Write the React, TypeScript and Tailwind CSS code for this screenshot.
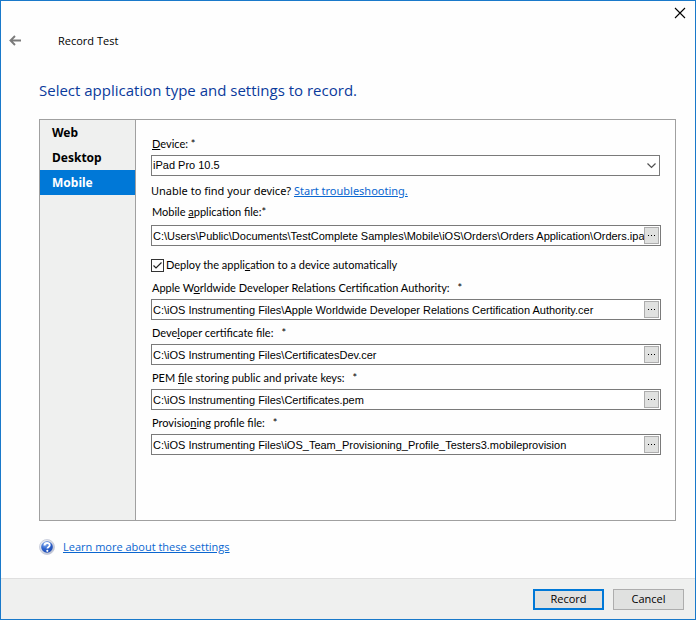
import type { ReactNode } from "react"
import clsx from "clsx"

const tabs = ["Web", "Desktop", "Mobile"]

const certificateFields = [
  {
    id: "authority",
    label: <>Apple W<u>o</u>rldwide Developer Relations Certification Authority:</>,
    value: "C:\\iOS Instrumenting Files\\Apple Worldwide Developer Relations Certification Authority.cer",
  },
  {
    id: "certificate",
    label: <>Deve<u>l</u>oper certificate file:</>,
    value: "C:\\iOS Instrumenting Files\\CertificatesDev.cer",
  },
  {
    id: "pem",
    label: <>PEM <u>f</u>ile storing public and private keys:</>,
    value: "C:\\iOS Instrumenting Files\\Certificates.pem",
  },
  {
    id: "profile",
    label: <>Provisio<u>n</u>ing profile file:</>,
    value: "C:\\iOS Instrumenting Files\\iOS_Team_Provisioning_Profile_Testers3.mobileprovision",
  },
]

function FileInput({ id, value }: { id: string; value: string }) {
  return (
    <div className="flex h-[21px] items-center border border-[#7a7a7a] bg-white pr-px">
      <input
        id={id}
        type="text"
        defaultValue={value}
        className="h-full min-w-0 flex-1 pl-px font-['Liberation_Sans',sans-serif] text-[11px] outline-none"
      />
      <button
        type="button"
        aria-label="Browse"
        className="flex h-[17px] w-[15px] items-center justify-center border border-[#adadad] bg-[#e0e1e0]"
      >
        <svg width="7" height="1" viewBox="0 0 7 1" shapeRendering="crispEdges">
          <path d="M0 0h1v1H0zM3 0h1v1H3zM6 0h1v1H6z" fill="#000" />
        </svg>
      </button>
    </div>
  )
}

function FieldLabel({ id, children }: { id: string; children: ReactNode }) {
  return (
    <label htmlFor={id} className="block h-4 pl-px leading-4">
      {children}
    </label>
  )
}

function HelpIcon() {
  return (
    <svg width="16" height="16" viewBox="0 0 16 16">
      <defs>
        <linearGradient id="ring" x1="0" y1="0" x2="1" y2="1">
          <stop offset="0" stopColor="#f4f6fa" />
          <stop offset="1" stopColor="#b4b9ca" />
        </linearGradient>
        <radialGradient id="ball" cx="0.35" cy="0.25" r="0.8">
          <stop offset="0" stopColor="#8fb4f0" />
          <stop offset="0.5" stopColor="#2f66d0" />
          <stop offset="1" stopColor="#1c48b0" />
        </radialGradient>
      </defs>
      <circle cx="8" cy="8" r="7.5" fill="url(#ring)" stroke="#c3c8d8" strokeWidth="0.8" />
      <circle cx="8" cy="8" r="5.8" fill="url(#ball)" />
      <path d="M5.5 6.5C5.5 4.8 6.6 4 8.1 4s2.6.8 2.6 2.2c0 1.6-2.3 1.8-2.3 3.4" fill="none" stroke="#fff" strokeWidth="1.9" />
      <circle cx="8.3" cy="11.8" r="1.1" fill="#fff" />
    </svg>
  )
}

export default function App() {
  return (
    <div className="flex min-h-screen flex-col border border-[#1979ca] bg-[#fefefe] font-['Open_Sans','Noto_Sans',sans-serif] text-[11px] text-black">
      <header>
        <div className="flex h-6 items-center justify-end pr-[9px]">
          <button type="button" aria-label="Close">
            <svg width="12" height="12" viewBox="0 0 12 12">
              <path d="M1 1l10 10M11 1L1 11" stroke="#000" strokeWidth="1.1" />
            </svg>
          </button>
        </div>
        <div className="flex h-8 items-center pl-2">
          <button type="button" aria-label="Back" className="w-[49px]">
            <svg width="12" height="12" viewBox="0 0 12 12">
              <path d="M12 5.5H1.5M6 1L1.5 5.5 6 10" fill="none" stroke="#7a7a7a" strokeWidth="1.9" />
            </svg>
          </button>
          <span>Record Test</span>
        </div>
      </header>

      <main className="flex flex-1 flex-col pr-[19px] pl-[38px]">
        <h1 className="mt-[21px] text-[15px] leading-6 text-[#0a3a9c]">
          Select application type and settings to record.
        </h1>

        <div className="mt-[17px] flex flex-1 border border-[#a0a0a0]">
          <nav className="w-24 border-r border-[#a0a0a0] bg-[#eff0ef]">
            {tabs.map((tab) => (
              <button
                key={tab}
                type="button"
                className={clsx(
                  "block h-[25px] w-full pl-3 text-left font-['Noto_Sans',sans-serif] text-[12px] font-bold",
                  tab === "Mobile" && "bg-[#0078d7] text-white",
                )}
              >
                {tab}
              </button>
            ))}
          </nav>

          <form className="min-w-0 flex-1 pt-4 pr-[14px] pl-[15px] font-['Lato',sans-serif]">
            <FieldLabel id="device">
              <u>D</u>evice: *
            </FieldLabel>
            <div className="relative mt-[3px] mr-px">
              <select
                id="device"
                className="block h-[21px] w-full appearance-none border border-[#7a7a7a] bg-white pl-px font-['Liberation_Sans',sans-serif] text-[11px] outline-none"
              >
                <option>iPad Pro 10.5</option>
              </select>
              <svg width="9" height="6" viewBox="0 0 9 6" className="pointer-events-none absolute top-2 right-1">
                <path d="M.5.5l4 4 4-4" fill="none" stroke="#505050" strokeWidth="1.2" />
              </svg>
            </div>

            <p className="mt-[7px] h-4 font-['Noto_Sans',sans-serif] leading-4">
              Unable to find your device?{" "}
              <a href="#" className="text-[#0a66d0] underline">
                Start troubleshooting.
              </a>
            </p>

            <div className="mt-[5px]">
              <FieldLabel id="app-file">
                Mobile <u>a</u>pplication file:*
              </FieldLabel>
              <div className="mt-[5px]">
                <FileInput
                  id="app-file"
                  value="C:\Users\Public\Documents\TestComplete Samples\Mobile\iOS\Orders\Orders Application\Orders.ipa"
                />
              </div>
            </div>

            <label className="mt-[11px] flex h-4 items-center gap-0.5">
              <span className="relative flex">
                <input
                  type="checkbox"
                  defaultChecked
                  className="peer size-[13px] appearance-none border border-[#333] bg-white"
                />
                <svg
                  width="13"
                  height="13"
                  viewBox="0 0 13 13"
                  className="pointer-events-none absolute inset-0 hidden peer-checked:block"
                >
                  <path d="M2.5 6.5l2.5 2.5 5.5-5.5" fill="none" stroke="#222" strokeWidth="1.2" />
                </svg>
              </span>
              <span>
                Deploy the appli<u>c</u>ation to a device automatically
              </span>
            </label>

            <div className="mt-[7px] flex flex-col gap-[5px]">
              {certificateFields.map((field) => (
                <div key={field.id}>
                  <FieldLabel id={field.id}>
                    {field.label}
                    <span className="ml-2">*</span>
                  </FieldLabel>
                  <div className="mt-[3px]">
                    <FileInput id={field.id} value={field.value} />
                  </div>
                </div>
              ))}
            </div>
          </form>
        </div>

        <div className="flex h-[57px] items-center gap-2 pb-[5px]">
          <HelpIcon />
          <a href="#" className="text-[#0a66d0] underline">
            Learn more about these settings
          </a>
        </div>
      </main>

      <footer className="flex h-[41px] items-center justify-end gap-[9px] border-t border-[#dfdfdf] bg-[#eff0ef] pr-[11px]">
        <button type="submit" className="h-[21px] w-[71px] border-2 border-[#0078d7] bg-[#e0e1e0] leading-4">
          Record
        </button>
        <button type="button" className="h-[21px] w-[71px] border border-[#adadad] bg-[#e0e1e0] leading-4">
          Cancel
        </button>
      </footer>
    </div>
  )
}
